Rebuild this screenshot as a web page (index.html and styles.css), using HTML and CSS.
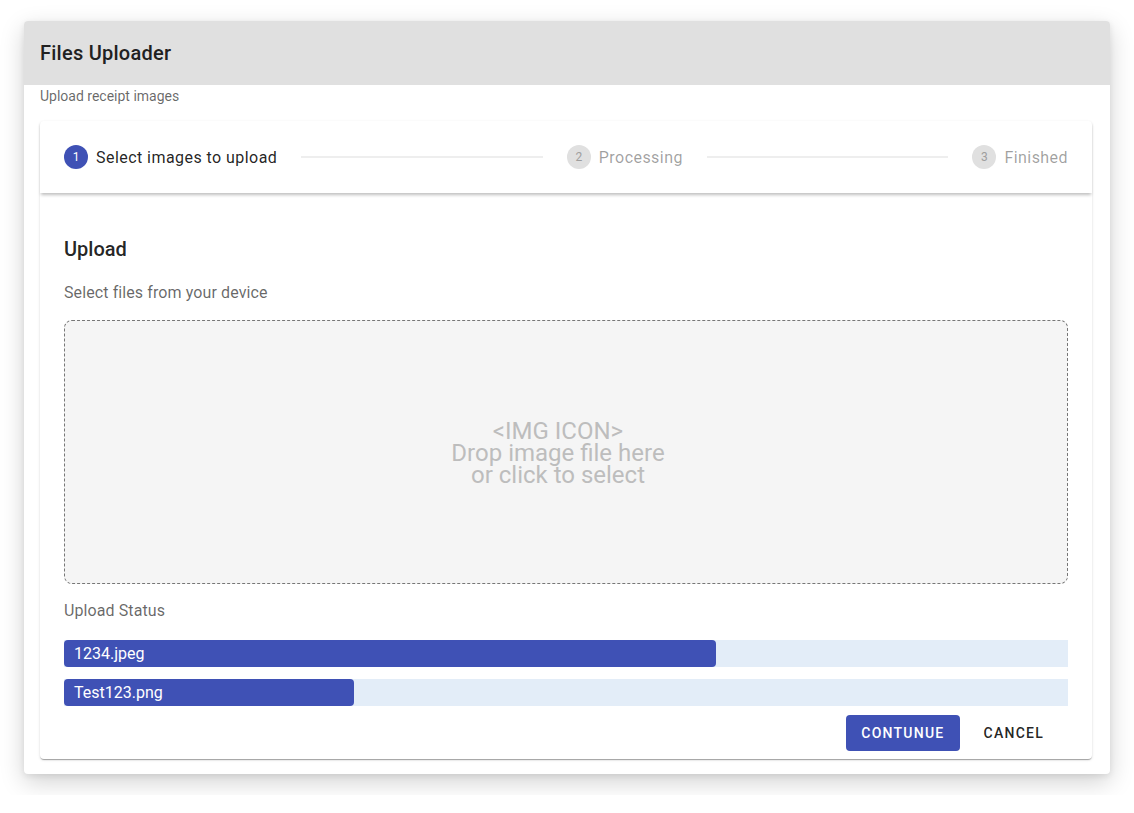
FILE: index.html
```html
<!DOCTYPE html>
<html>
<head>
<meta charset="utf-8">
<link rel="stylesheet" href="styles.css">
</head>
<body>
<div class="outer">
  <div class="outer-head">Files Uploader</div>
  <div class="outer-sub">Upload receipt images</div>
  <div class="inner">
    <div class="stepper">
      <div class="step active"><span class="dot">1</span><span class="label">Select images to upload</span></div>
      <div class="line"></div>
      <div class="step"><span class="dot">2</span><span class="label">Processing</span></div>
      <div class="line"></div>
      <div class="step"><span class="dot">3</span><span class="label">Finished</span></div>
    </div>
    <div class="content">
      <h2 class="title">Upload</h2>
      <div class="muted sel">Select files from your device</div>
      <div class="drop">
        <div class="drop-text">&lt;IMG ICON&gt;<br>Drop image file here<br>or click to select</div>
      </div>
      <div class="muted status">Upload Status</div>
      <div class="bar"><div class="fill" style="width:64.9%">1234.jpeg</div></div>
      <div class="bar"><div class="fill" style="width:28.9%">Test123.png</div></div>
    </div>
    <div class="actions">
      <button class="btn primary">CONTUNUE</button>
      <button class="btn text">CANCEL</button>
    </div>
  </div>
</div>
</body>
</html>
```
FILE: styles.css
```css
* { box-sizing: border-box; }
body {
  margin: 0;
  padding: 21px 24px;
  font-family: Roboto, "Liberation Sans", sans-serif;
  background: #fff;
}
.outer {
  width: 1086px;
  background: #fff;
  border-radius: 4px;
  box-shadow: 0 8px 24px rgba(0,0,0,0.18), 0 2px 6px rgba(0,0,0,0.08);
  padding-bottom: 15px;
  overflow: hidden;
}
.outer-head {
  height: 64px;
  background: #e0e0e0;
  display: flex;
  align-items: center;
  padding: 0 16px;
  font-size: 20px;
  font-weight: 500;
  letter-spacing: 0.25px;
  color: #212121;
}
.outer-sub {
  padding: 2px 16px 0;
  height: 36px;
  line-height: 18px;
  font-size: 14px;
  color: rgba(0,0,0,0.6);
}
.inner {
  width: 1052px;
  margin: 0 16px;
  background: #fff;
  border-radius: 4px;
  box-shadow: 0 2px 1px -1px rgba(0,0,0,0.2), 0 1px 1px rgba(0,0,0,0.14), 0 1px 3px rgba(0,0,0,0.12);
  padding-bottom: 8px;
}
.stepper {
  height: 72px;
  display: flex;
  align-items: center;
  padding: 0 24px;
  box-shadow: 0 3px 3px -1px rgba(0,0,0,0.25);
  position: relative;
}
.step {
  display: flex;
  align-items: center;
  flex: none;
}
.dot {
  width: 24px;
  height: 24px;
  border-radius: 50%;
  background: #e0e0e0;
  color: #9e9e9e;
  font-size: 12px;
  display: flex;
  align-items: center;
  justify-content: center;
  margin-right: 8px;
}
.label {
  font-size: 16px;
  color: rgba(0,0,0,0.38);
  letter-spacing: 0.45px;
}
.step.active .dot { background: #3f51b5; color: #fff; }
.step.active .label { color: rgba(0,0,0,0.87); }
.line {
  flex: 1;
  height: 2px;
  background: #eeeeee;
  margin: 0 24px;
}
.content {
  padding: 40px 24px 0;
}
.title {
  margin: 0;
  font-size: 20px;
  font-weight: 500;
  line-height: 32px;
  color: rgba(0,0,0,0.87);
}
.muted {
  font-size: 16px;
  color: rgba(0,0,0,0.6);
  line-height: 24px;
  letter-spacing: 0.1px;
}
.sel { margin-top: 16px; }
.drop {
  margin-top: 15px;
  height: 264px;
  background: #f5f5f5;
  border: 1px dashed #777;
  border-radius: 8px;
  display: flex;
  align-items: center;
  justify-content: center;
  padding-right: 16px;
}
.drop-text {
  text-align: center;
  font-size: 24px;
  line-height: 22px;
  color: #bdbdbd;
  margin-top: 1px;
}
.status { margin-top: 15px; }
.bar {
  height: 27px;
  background: #e3edf8;
  margin-top: 17px;
}
.bar + .bar { margin-top: 12px; }
.fill {
  height: 100%;
  background: #3f51b5;
  border-radius: 4px;
  color: #fff;
  font-size: 16px;
  line-height: 27px;
  padding-left: 10px;
  white-space: nowrap;
}
.actions {
  display: flex;
  justify-content: flex-end;
  gap: 8px;
  padding: 9px 32px 0 0;
}
.btn {
  height: 36px;
  border: none;
  border-radius: 4px;
  font-family: Roboto, "Liberation Sans", sans-serif;
  font-size: 14px;
  font-weight: 500;
  letter-spacing: 1.25px;
  padding: 0 16px;
  cursor: pointer;
}
.btn.primary { background: #3f51b5; color: #fff; padding: 0 15px; }
.btn.text { background: transparent; color: rgba(0,0,0,0.87); }
```
